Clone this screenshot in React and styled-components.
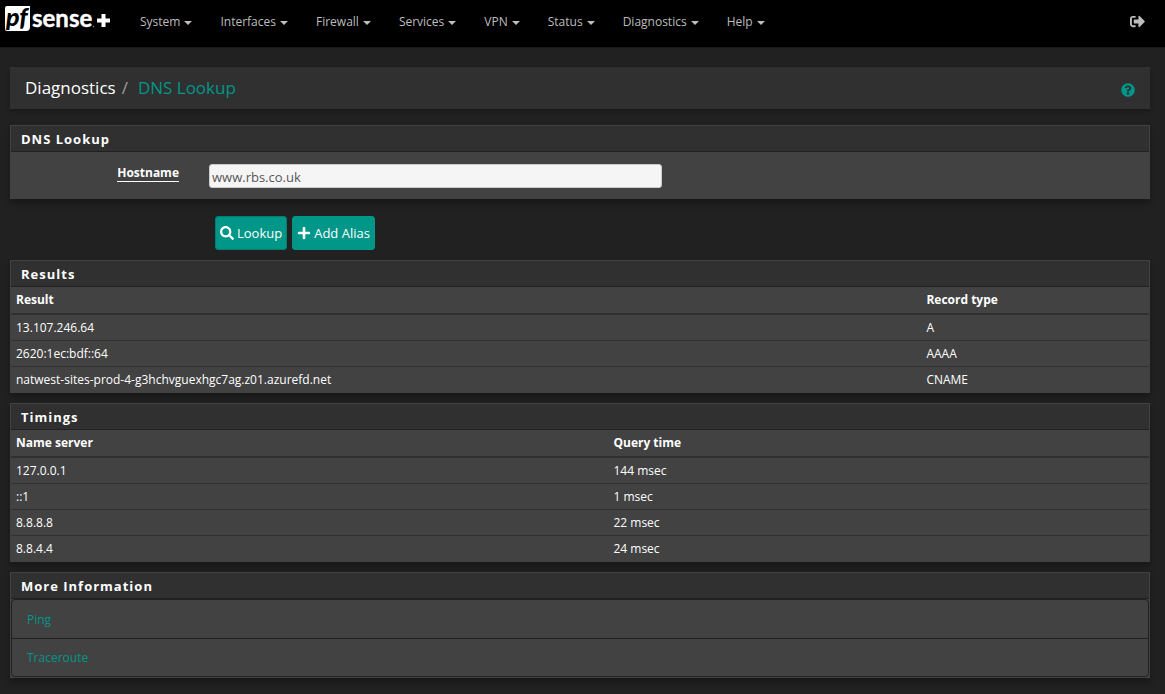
import { useState } from 'react';
import styled, { createGlobalStyle } from 'styled-components';
import { FaPlus, FaQuestionCircle, FaSearch, FaSignOutAlt } from 'react-icons/fa';

const menus = ['System', 'Interfaces', 'Firewall', 'Services', 'VPN', 'Status', 'Diagnostics', 'Help'];

const results = [
  ['13.107.246.64', 'A'],
  ['2620:1ec:bdf::64', 'AAAA'],
  ['natwest-sites-prod-4-g3hchvguexhgc7ag.z01.azurefd.net', 'CNAME'],
];

const timings = [
  ['127.0.0.1', '144 msec'],
  ['::1', '1 msec'],
  ['8.8.8.8', '22 msec'],
  ['8.8.4.4', '24 msec'],
];

function Logo() {
  return (
    <svg width="112" height="40" viewBox="-2 -6 112 40" role="img" aria-label="pfSense plus">
      <path d="M2 0h23v21q0 4-4 4H2q-2 0-2-2V2q0-2 2-2z" fill="#fff" />
      <text x="1" y="20" fontFamily="Lato, sans-serif" fontSize="25" fontWeight="900" fontStyle="italic" fill="#000">pf</text>
      <text x="27" y="21" fontFamily="Lato, sans-serif" fontSize="24" fontWeight="700" fill="#fff" stroke="#fff" strokeWidth="0.4">sense</text>
      <circle cx="88.500" cy="20.500" r="0.700" fill="#888" />
      <path d="M96.500 8h4v4.500h4.500v4h-4.500v4.500h-4v-4.500h-4.500v-4h4.500z" fill="#fff" />
    </svg>
  );
}

function DataTable({ head, rows, firstWidth }) {
  return (
    <Table>
      <thead>
        <tr>
          <Th $width={firstWidth}>{head[0]}</Th>
          <Th>{head[1]}</Th>
        </tr>
      </thead>
      <tbody>
        {rows.map((row) => (
          <tr key={row[0]}>
            <Td>{row[0]}</Td>
            <Td>{row[1]}</Td>
          </tr>
        ))}
      </tbody>
    </Table>
  );
}

export default function App() {
  const [host, setHost] = useState('www.rbs.co.uk');

  return (
    <>
      <GlobalStyle />
      <Navbar>
        <Brand href="#"><Logo /></Brand>
        <Menu>
          {menus.map((name) => (
            <MenuLink key={name} href="#">
              {name}
              <Caret />
            </MenuLink>
          ))}
        </Menu>
        <Logout href="#" aria-label="Log out"><FaSignOutAlt /></Logout>
      </Navbar>

      <Main>
        <Header>
          <Crumbs>
            <span>Diagnostics</span>
            <Slash>/</Slash>
            <CrumbLink href="#">DNS Lookup</CrumbLink>
          </Crumbs>
          <HelpLink href="#" aria-label="Help"><FaQuestionCircle /></HelpLink>
        </Header>

        <form onSubmit={(e) => e.preventDefault()}>
          <Panel>
            <PanelTitle>DNS Lookup</PanelTitle>
            <FormRow>
              <Label htmlFor="host"><span>Hostname</span></Label>
              <Input id="host" value={host} onChange={(e) => setHost(e.target.value)} />
            </FormRow>
          </Panel>
          <Actions>
            <Button type="submit" $outlined><FaSearch />Lookup</Button>
            <Button type="button"><FaPlus />Add Alias</Button>
          </Actions>
        </form>

        <Panel>
          <PanelTitle>Results</PanelTitle>
          <DataTable head={['Result', 'Record type']} rows={results} firstWidth="80%" />
        </Panel>

        <Panel>
          <PanelTitle>Timings</PanelTitle>
          <DataTable head={['Name server', 'Query time']} rows={timings} firstWidth="52.5%" />
        </Panel>

        {/* Links to the related tools */}
        <Panel>
          <PanelTitle>More Information</PanelTitle>
          <List>
            <li><a href="#">Ping</a></li>
            <li><a href="#">Traceroute</a></li>
          </List>
        </Panel>
      </Main>
    </>
  );
}

const GlobalStyle = createGlobalStyle`
  * {
    box-sizing: border-box;
  }

  body {
    margin: 0;
    background: #212121;
    color: #fff;
    font-family: "Open Sans", "Noto Sans", sans-serif;
    font-size: 12px;
    line-height: 18px;
  }

  a {
    color: #009688;
    text-decoration: none;
  }
`;

const Navbar = styled.nav`
  display: flex;
  align-items: center;
  height: 48px;
  padding: 0 20px 0 3px;
  background: #000;
  border-bottom: 1px solid #1a1718;
`;

const Brand = styled.a`
  display: flex;
  height: 47px;
  margin-right: 11px;
`;

const Menu = styled.div`
  display: flex;
  flex: 1;
  margin-bottom: 3px;
`;

const MenuLink = styled.a`
  display: flex;
  align-items: center;
  gap: 4px;
  padding: 0 14px;
  color: #bdbdbd;
`;

const Caret = styled.span`
  margin-top: 1px;
  border-top: 4px solid #bdbdbd;
  border-left: 4px solid transparent;
  border-right: 4px solid transparent;
`;

const Logout = styled.a`
  display: flex;
  margin-bottom: 5px;
  color: #bdbdbd;
  font-size: 15px;
`;

const Main = styled.main`
  padding: 19px 15px 16px 10px;
`;

const Header = styled.header`
  display: flex;
  align-items: center;
  justify-content: space-between;
  height: 42px;
  margin-bottom: 16px;
  padding: 0 15px;
  background: #303030;
  box-shadow: 0 2px 4px rgba(0, 0, 0, 0.3);
`;

const Crumbs = styled.div`
  display: flex;
  font-size: 17px;
  line-height: 24px;
`;

const Slash = styled.span`
  margin: 0 10px 0 6px;
  color: #9e9e9e;
`;

const CrumbLink = styled.a`
  color: #009688;
`;

const HelpLink = styled.a`
  display: flex;
  margin-top: 4px;
  font-size: 14px;
`;

const Panel = styled.section`
  margin-bottom: 10px;
  background: #424242;
  border: 1px solid #424242;
  box-shadow: 0 4px 6px rgba(0, 0, 0, 0.3);
`;

const PanelTitle = styled.h2`
  height: 26px;
  margin: 0;
  padding: 0 10px;
  background: #303030;
  border-bottom: 1px solid #212121;
  font-size: 13px;
  font-weight: 700;
  letter-spacing: 1px;
  line-height: 26px;
`;

const FormRow = styled.div`
  display: grid;
  grid-template-columns: 168px calc(40% - 2px);
  column-gap: 30px;
  padding: 12px 0 10px;
`;

const Label = styled.label`
  font-weight: 700;
  text-align: right;

  span {
    border-bottom: 1px solid #fff;
  }
`;

const Input = styled.input`
  height: 24px;
  padding: 2px 2px 0;
  background: #f5f5f5;
  border: 1px solid #ccc;
  border-radius: 3px;
  color: #555;
  font-family: inherit;
  font-size: 13px;
`;

const Actions = styled.div`
  display: flex;
  gap: 5px;
  margin: 17px 0 10px 205px;
`;

const Button = styled.button`
  display: flex;
  align-items: center;
  gap: 3px;
  height: 34px;
  padding: 0 4px;
  background: #009688;
  border: 1px solid ${(props) => (props.$outlined ? '#007d71' : '#009688')};
  border-radius: 3px;
  color: #fff;
  font-family: inherit;
  font-size: 13px;

  svg {
    width: 14px;
    height: 14px;
  }
`;

const Table = styled.table`
  width: 100%;
  border-collapse: separate;
  border-spacing: 0;
`;

const Th = styled.th`
  width: ${(props) => props.$width || 'auto'};
  padding: 4px 5px;
  border-bottom: 2px solid #303030;
  font-weight: 700;
  text-align: left;
`;

const Td = styled.td`
  height: 26px;
  padding: 3px 5px;
  border-top: 1px solid #303030;

  tr:first-child > & {
    height: 25px;
    border-top: 0;
  }
`;

const List = styled.ul`
  margin: 0;
  padding: 0;
  border: 1px solid #212121;
  border-radius: 4px;
  list-style: none;

  li {
    padding: 11px 15px 9px;
  }

  li + li {
    padding-top: 10px;
    border-top: 1px solid #212121;
  }
`;
